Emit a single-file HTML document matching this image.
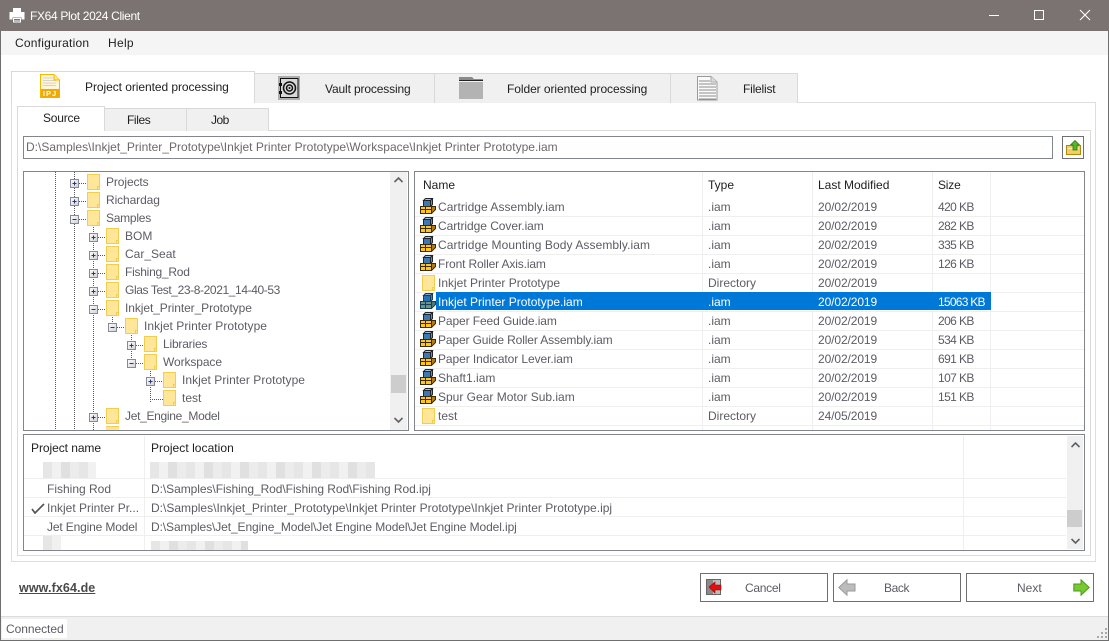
<!DOCTYPE html>
<html><head><meta charset="utf-8"><title>FX64 Plot 2024 Client</title>
<style>
html,body{margin:0;padding:0;background:#fff}
#w{position:relative;width:1109px;height:641px;overflow:hidden;background:#fff;font:12px/16px "Liberation Sans",sans-serif;color:#1e1e1e}
#w div,#w span,#w svg{position:absolute}
.t{white-space:nowrap}
.g{color:#5c5c64}
.z{letter-spacing:-.6px}
.b{box-sizing:border-box;border:1px solid #d9d9d9}
.d{box-sizing:border-box;border:1px solid #82868a;background:#fff}
.h{height:1px;background:#efefef}
.v{width:1px;background:#efefef}
.dv{width:1px;background-image:linear-gradient(#555 50%,transparent 50%);background-size:1px 2px}
.dh{height:1px;background-image:linear-gradient(90deg,#555 50%,transparent 50%);background-size:2px 1px}
.tab{box-sizing:border-box;border:1px solid #d9d9d9;border-bottom:0;background:#f0f0f0}
.btn{box-sizing:border-box;border:1px solid #6f6f6f;background:#fff;top:573px;height:29px;width:128px}
.bl{background:repeating-linear-gradient(90deg,#e6e6e6 0 9px,#f1f1f1 9px 18px,#e0e0e0 18px 27px,#ececec 27px 36px)}
</style></head><body>
<div id="w">
<svg width="0" height="0" style="left:0;top:0">
<defs>
<g id="f"><path d="M.5.5H12.500V15.500H.5Z" fill="#ffe699" stroke="#f3cd4f"/><path d="M10.500 15.500V12.500H12.500" fill="none" stroke="#f3cd4f"/></g>
<linearGradient id="pg" x1="0" y1="0" x2="1" y2="1"><stop offset="0" stop-color="#fff"/><stop offset="1" stop-color="#d0d0d8"/></linearGradient>
<g id="p"><rect x=".5" y=".5" width="8" height="8" fill="url(#pg)" stroke="#858a98"/><path d="M2.500 4.500H6.500" stroke="#28367a"/><path d="M4.500 2.500V6.500" stroke="#28367a"/></g>
<g id="m"><rect x=".5" y=".5" width="8" height="8" fill="url(#pg)" stroke="#858a98"/><path d="M2.500 4.500H6.500" stroke="#28367a"/></g>
<g id="a" stroke="#20242c" stroke-width="1">
<path d="M3.500 2.500 5.500 .5H12.500L10.500 2.500Z" fill="#a8c4dc"/>
<path d="M10.500 2.500 12.500 .5V6.500L10.500 8.500Z" fill="#6a90b0"/>
<path d="M3.500 2.500H10.500V8.500H3.500Z" fill="#3c78b4"/>
<path d="M11.500 8.500H15.500V11.500L11.500 15.500Z" fill="#b87a18" stroke="#3a2a08"/>
<path d="M.5 8.500H11.500V15.500H.5Z" fill="#ffc820" stroke="#3a2a08"/>
<path d="M.5 11.500H11.500M5.500 8.500V15.500" fill="none" stroke="#3a2a08"/>
</g>
<g id="as" stroke="#15405c" stroke-width="1">
<path d="M3.500 2.500 5.500 .5H12.500L10.500 2.500Z" fill="#7fa4c4"/>
<path d="M10.500 2.500 12.500 .5V6.500L10.500 8.500Z" fill="#4f80a8"/>
<path d="M3.500 2.500H10.500V8.500H3.500Z" fill="#2870b4"/>
<path d="M11.500 8.500H15.500V11.500L11.500 15.500Z" fill="#4f7a70"/>
<path d="M.5 8.500H11.500V15.500H.5Z" fill="#6a9484"/>
<path d="M.5 11.500H11.500M5.500 8.500V15.500" fill="none"/>
</g>
</defs></svg>

<!-- title bar -->
<div style="left:0;top:0;width:1109px;height:31px;background:#7a7371"></div>
<svg style="left:9px;top:8px" width="16" height="15" viewBox="0 0 16 15"><path d="M4 0H12V4H4Z" fill="#fff"/><path d="M1 4.500H15V11H13V9H3V11H1Z" fill="#fff" stroke="#fff"/><path d="M4 10H12V14.500H4Z" fill="#fff"/><path d="M5 11.500H11M5 13H11" stroke="#777"/></svg>
<span class="t" style="left:30px;top:8px;color:#fff;font-size:12px;letter-spacing:-.33px">FX64 Plot 2024 Client</span>
<div style="left:989px;top:15px;width:10px;height:1px;background:#fff"></div>
<div style="left:1034px;top:10px;width:10px;height:10px;box-sizing:border-box;border:1px solid #fff"></div>
<svg style="left:1079px;top:9px" width="12" height="12" viewBox="0 0 12 12"><path d="M1 1 11 11M11 1 1 11" stroke="#fff" stroke-width="1.100"/></svg>

<!-- menu -->
<div style="left:0;top:31px;width:1109px;height:24px;background:#f5f5f5"></div>
<span class="t" style="left:15px;top:35px;letter-spacing:.22px">Configuration</span>
<span class="t" style="left:108px;top:35px;letter-spacing:.3px">Help</span>

<!-- outer panel -->
<div class="b" style="left:11px;top:102px;width:1085px;height:460px;background:#fff;border-color:#dedede"></div>
<div class="tab" style="left:254px;top:73px;width:181px;height:30px"></div>
<div class="tab" style="left:434px;top:73px;width:237px;height:30px"></div>
<div class="tab" style="left:670px;top:73px;width:128px;height:30px"></div>
<div class="tab" style="left:11px;top:71px;width:244px;height:32px;background:#fff"></div>
<div style="left:12px;top:102px;width:242px;height:1px;background:#fff"></div>

<svg style="left:40px;top:74px" width="20" height="24" viewBox="0 0 20 24"><path d="M.5.500H14L19.500 6V23.500H.5Z" fill="#fff" stroke="#f5b800"/><path d="M1 1H13.500V6H19V15H1Z" fill="#fff5d8"/><path d="M3 4H13M3 6.500H16M3 9H16M3 11.500H16" stroke="#d9d2c0"/><path d="M14 .5V6H19.500" fill="#ffe38a" stroke="#f5b800"/><path d="M1 15H19.500V23.500H1Z" fill="#f0a900"/><text x="10" y="22" text-anchor="middle" font-size="7.500" font-weight="bold" fill="#fff" font-family="Liberation Sans" letter-spacing="1">IPJ</text></svg>
<span class="t" style="left:85px;top:79px;letter-spacing:-.06px">Project oriented processing</span>

<svg style="left:278px;top:76px" width="22" height="24" viewBox="0 0 22 24"><rect width="22" height="24" fill="#aeaeae"/><rect x="2.500" y="2.500" width="17.500" height="19" fill="#d8d8d8" stroke="#111"/><circle cx="11.500" cy="12" r="6" fill="none" stroke="#111" stroke-width="1.500"/><circle cx="11.500" cy="12" r="3" fill="none" stroke="#111" stroke-width="1.500"/><circle cx="11.500" cy="12" r="1" fill="#111"/><rect x="1" y="7" width="3" height="3" fill="#111"/><rect x="1" y="15" width="3" height="3" fill="#111"/></svg>
<span class="t" style="left:325px;top:81px;letter-spacing:-.14px">Vault processing</span>

<svg style="left:459px;top:77px" width="24" height="22" viewBox="0 0 24 22"><path d="M0 0H13L15 2H24V3H0Z" fill="#8a8a8a"/><path d="M0 3.500H24" stroke="#222"/><rect y="5" width="24" height="17" fill="#b3b3b3"/></svg>
<span class="t" style="left:507px;top:81px;letter-spacing:-.07px">Folder oriented processing</span>

<svg style="left:697px;top:76px" width="21" height="25" viewBox="0 0 21 25"><path d="M.5.500H14L20 6V24H.5Z" fill="#fafafa" stroke="#9a9a9a"/><path d="M14 .5V6H20" fill="#ddd" stroke="#aaa"/><path d="M2 5H13M2 8H19M2 11H19M2 14H19M2 17H19M2 20H19M2 23H19" stroke="#8e8e8e"/></svg>
<span class="t" style="left:743px;top:81px;letter-spacing:-.2px">Filelist</span>

<!-- inner panel -->
<div class="b" style="left:17px;top:130px;width:1074px;height:426px;background:#fff"></div>
<div class="tab" style="left:104px;top:108px;width:83px;height:23px"></div>
<div class="tab" style="left:186px;top:108px;width:83px;height:23px"></div>
<div class="tab" style="left:17px;top:106px;width:88px;height:25px;background:#fff"></div>
<div style="left:18px;top:130px;width:86px;height:1px;background:#fff"></div>
<span class="t" style="left:43px;top:110px;letter-spacing:-.2px">Source</span>
<span class="t" style="left:127px;top:112px;letter-spacing:-.4px">Files</span>
<span class="t" style="left:211px;top:112px;letter-spacing:-.5px">Job</span>

<!-- path -->
<div class="d" style="left:23px;top:136px;width:1030px;height:23px"></div>
<span class="t" style="left:26px;top:139px;color:#6a6a6a;letter-spacing:.01px">D:\Samples\Inkjet_Printer_Prototype\Inkjet Printer Prototype\Workspace\Inkjet Printer Prototype.iam</span>
<div class="d" style="left:1062px;top:136px;width:22px;height:23px;border-color:#6f6f6f"></div>
<svg style="left:1066px;top:140px" width="15" height="15" viewBox="0 0 15 15"><path d="M.5 5.500H14.500V14.500H.5Z" fill="#f0d060" stroke="#b08a10"/><path d="M2 8.500H13" stroke="#fff2b0"/><path d="M9 .5 13.500 5H11V10H7V5H4.500Z" fill="#55b82a" stroke="#2a7a10" stroke-width=".8"/></svg>

<!-- tree -->
<div class="d" style="left:23px;top:171px;width:386px;height:260px"></div>
<div style="left:24px;top:172px;width:384px;height:258px;overflow:hidden">
 <div class="dv" style="left:31px;top:0;height:258px"></div>
 <div class="dv" style="left:50px;top:0;height:258px"></div>
 <div class="dv" style="left:69px;top:51px;height:207px"></div>
 <div class="dv" style="left:88px;top:141px;height:16px"></div>
 <div class="dv" style="left:107px;top:159px;height:36px"></div>
 <div class="dv" style="left:126px;top:195px;height:36px"></div>
 <div class="dh" style="left:55px;top:11px;width:8px"></div>
 <div class="dh" style="left:55px;top:29px;width:8px"></div>
 <div class="dh" style="left:55px;top:47px;width:8px"></div>
 <div class="dh" style="left:74px;top:65px;width:8px"></div>
 <div class="dh" style="left:74px;top:83px;width:8px"></div>
 <div class="dh" style="left:74px;top:101px;width:8px"></div>
 <div class="dh" style="left:74px;top:119px;width:8px"></div>
 <div class="dh" style="left:74px;top:137px;width:8px"></div>
 <div class="dh" style="left:93px;top:155px;width:8px"></div>
 <div class="dh" style="left:112px;top:173px;width:8px"></div>
 <div class="dh" style="left:112px;top:191px;width:8px"></div>
 <div class="dh" style="left:131px;top:209px;width:8px"></div>
 <div class="dh" style="left:126px;top:227px;width:13px"></div>
 <div class="dh" style="left:74px;top:245px;width:8px"></div>
</div>
<svg style="left:70px;top:179px" width="9" height="9"><use href="#p"/></svg>
<svg style="left:70px;top:197px" width="9" height="9"><use href="#p"/></svg>
<svg style="left:70px;top:215px" width="9" height="9"><use href="#m"/></svg>
<svg style="left:89px;top:233px" width="9" height="9"><use href="#p"/></svg>
<svg style="left:89px;top:251px" width="9" height="9"><use href="#p"/></svg>
<svg style="left:89px;top:269px" width="9" height="9"><use href="#p"/></svg>
<svg style="left:89px;top:287px" width="9" height="9"><use href="#p"/></svg>
<svg style="left:89px;top:305px" width="9" height="9"><use href="#m"/></svg>
<svg style="left:108px;top:323px" width="9" height="9"><use href="#m"/></svg>
<svg style="left:127px;top:341px" width="9" height="9"><use href="#p"/></svg>
<svg style="left:127px;top:359px" width="9" height="9"><use href="#m"/></svg>
<svg style="left:146px;top:377px" width="9" height="9"><use href="#p"/></svg>
<svg style="left:89px;top:413px" width="9" height="9"><use href="#p"/></svg>

<svg style="left:87px;top:174px" width="13" height="16"><use href="#f"/></svg><span class="t g" style="left:106px;top:174px;letter-spacing:-.1px">Projects</span>
<svg style="left:87px;top:192px" width="13" height="16"><use href="#f"/></svg><span class="t g" style="left:106px;top:192px;letter-spacing:-.1px">Richardag</span>
<svg style="left:87px;top:210px" width="13" height="16"><use href="#f"/></svg><span class="t g" style="left:106px;top:210px;letter-spacing:-.25px">Samples</span>
<svg style="left:106px;top:228px" width="13" height="16"><use href="#f"/></svg><span class="t g" style="left:125px;top:228px">BOM</span>
<svg style="left:106px;top:246px" width="13" height="16"><use href="#f"/></svg><span class="t g" style="left:125px;top:246px">Car_Seat</span>
<svg style="left:106px;top:264px" width="13" height="16"><use href="#f"/></svg><span class="t g" style="left:125px;top:264px;letter-spacing:-.25px">Fishing_Rod</span>
<svg style="left:106px;top:282px" width="13" height="16"><use href="#f"/></svg><span class="t g" style="left:125px;top:282px;letter-spacing:-.39px">Glas Test_23-8-2021_14-40-53</span>
<svg style="left:106px;top:300px" width="13" height="16"><use href="#f"/></svg><span class="t g" style="left:125px;top:300px;letter-spacing:-.08px">Inkjet_Printer_Prototype</span>
<svg style="left:125px;top:318px" width="13" height="16"><use href="#f"/></svg><span class="t g" style="left:144px;top:318px;letter-spacing:.04px">Inkjet Printer Prototype</span>
<svg style="left:144px;top:336px" width="13" height="16"><use href="#f"/></svg><span class="t g" style="left:163px;top:336px;letter-spacing:-.2px">Libraries</span>
<svg style="left:144px;top:354px" width="13" height="16"><use href="#f"/></svg><span class="t g" style="left:163px;top:354px;letter-spacing:-.1px">Workspace</span>
<svg style="left:163px;top:372px" width="13" height="16"><use href="#f"/></svg><span class="t g" style="left:182px;top:372px;letter-spacing:.04px">Inkjet Printer Prototype</span>
<svg style="left:163px;top:390px" width="13" height="16"><use href="#f"/></svg><span class="t g" style="left:182px;top:390px">test</span>
<svg style="left:106px;top:408px" width="13" height="16"><use href="#f"/></svg><span class="t g" style="left:125px;top:408px;letter-spacing:-.3px">Jet_Engine_Model</span>
<div style="left:106px;top:426px;width:13px;height:4px;background:#ffe699;border-top:1px solid #f3cd4f;box-sizing:border-box"></div>

<div style="left:390px;top:172px;width:17px;height:258px;background:#f0f0f0"></div>
<div style="left:391px;top:375px;width:15px;height:18px;background:#cdcdcd"></div>
<svg style="left:394px;top:177px" width="9" height="6"><path d="M.5 5 4.500 1 8.500 5" fill="none" stroke="#606060" stroke-width="1.600"/></svg>
<svg style="left:394px;top:417px" width="9" height="6"><path d="M.5 1 4.500 5 8.500 1" fill="none" stroke="#606060" stroke-width="1.600"/></svg>

<!-- file list -->
<div class="d" style="left:414px;top:171px;width:671px;height:260px"></div>
<div class="v" style="left:702px;top:172px;height:258px"></div>
<div class="v" style="left:812px;top:172px;height:258px"></div>
<div class="v" style="left:932px;top:172px;height:258px"></div>
<div class="v" style="left:990px;top:172px;height:258px"></div>
<div class="h" style="left:415px;top:216px;width:669px"></div>
<div class="h" style="left:415px;top:235px;width:669px"></div>
<div class="h" style="left:415px;top:254px;width:669px"></div>
<div class="h" style="left:415px;top:273px;width:669px"></div>
<div class="h" style="left:415px;top:292px;width:669px"></div>
<div class="h" style="left:415px;top:311px;width:669px"></div>
<div class="h" style="left:415px;top:330px;width:669px"></div>
<div class="h" style="left:415px;top:349px;width:669px"></div>
<div class="h" style="left:415px;top:368px;width:669px"></div>
<div class="h" style="left:415px;top:387px;width:669px"></div>
<div class="h" style="left:415px;top:406px;width:669px"></div>
<div class="h" style="left:415px;top:425px;width:669px"></div>
<div style="left:436px;top:292px;width:555px;height:18px;background:#0078d7"></div>

<span class="t" style="left:423px;top:177px">Name</span>
<span class="t" style="left:708px;top:177px">Type</span>
<span class="t" style="left:818px;top:177px">Last Modified</span>
<span class="t" style="left:938px;top:177px;letter-spacing:-.2px">Size</span>

<svg style="left:420px;top:198px" width="16" height="16"><use href="#a"/></svg><span class="t g" style="left:438px;top:199px;letter-spacing:.04px">Cartridge Assembly.iam</span><span class="t g" style="left:708px;top:199px">.iam</span><span class="t g" style="left:818px;top:199px;letter-spacing:-.1px">20/02/2019</span><span class="t g z" style="left:938px;top:199px">420 KB</span>
<svg style="left:420px;top:217px" width="16" height="16"><use href="#a"/></svg><span class="t g" style="left:438px;top:218px;letter-spacing:-.05px">Cartridge Cover.iam</span><span class="t g" style="left:708px;top:218px">.iam</span><span class="t g" style="left:818px;top:218px;letter-spacing:-.1px">20/02/2019</span><span class="t g z" style="left:938px;top:218px">282 KB</span>
<svg style="left:420px;top:236px" width="16" height="16"><use href="#a"/></svg><span class="t g" style="left:438px;top:237px;letter-spacing:.08px">Cartridge Mounting Body Assembly.iam</span><span class="t g" style="left:708px;top:237px">.iam</span><span class="t g" style="left:818px;top:237px;letter-spacing:-.1px">20/02/2019</span><span class="t g z" style="left:938px;top:237px">335 KB</span>
<svg style="left:420px;top:255px" width="16" height="16"><use href="#a"/></svg><span class="t g" style="left:438px;top:256px;letter-spacing:-.14px">Front Roller Axis.iam</span><span class="t g" style="left:708px;top:256px">.iam</span><span class="t g" style="left:818px;top:256px;letter-spacing:-.1px">20/02/2019</span><span class="t g z" style="left:938px;top:256px">126 KB</span>
<svg style="left:422px;top:275px" width="13" height="16"><use href="#f"/></svg><span class="t g" style="left:438px;top:275px">Inkjet Printer Prototype</span><span class="t g" style="left:708px;top:275px">Directory</span><span class="t g" style="left:818px;top:275px;letter-spacing:-.1px">20/02/2019</span>
<svg style="left:420px;top:293px" width="16" height="16"><use href="#as"/></svg><span class="t" style="left:438px;top:294px;color:#fff">Inkjet Printer Prototype.iam</span><span class="t" style="left:708px;top:294px;color:#fff">.iam</span><span class="t" style="left:818px;top:294px;color:#fff;letter-spacing:-.1px">20/02/2019</span><span class="t" style="left:938px;top:294px;color:#fff;letter-spacing:-.75px">15063 KB</span>
<svg style="left:420px;top:312px" width="16" height="16"><use href="#a"/></svg><span class="t g" style="left:438px;top:313px;letter-spacing:-.1px">Paper Feed Guide.iam</span><span class="t g" style="left:708px;top:313px">.iam</span><span class="t g" style="left:818px;top:313px;letter-spacing:-.1px">20/02/2019</span><span class="t g z" style="left:938px;top:313px">206 KB</span>
<svg style="left:420px;top:331px" width="16" height="16"><use href="#a"/></svg><span class="t g" style="left:438px;top:332px;letter-spacing:-.13px">Paper Guide Roller Assembly.iam</span><span class="t g" style="left:708px;top:332px">.iam</span><span class="t g" style="left:818px;top:332px;letter-spacing:-.1px">20/02/2019</span><span class="t g z" style="left:938px;top:332px">534 KB</span>
<svg style="left:420px;top:350px" width="16" height="16"><use href="#a"/></svg><span class="t g" style="left:438px;top:351px;letter-spacing:-.08px">Paper Indicator Lever.iam</span><span class="t g" style="left:708px;top:351px">.iam</span><span class="t g" style="left:818px;top:351px;letter-spacing:-.1px">20/02/2019</span><span class="t g z" style="left:938px;top:351px">691 KB</span>
<svg style="left:420px;top:369px" width="16" height="16"><use href="#a"/></svg><span class="t g" style="left:438px;top:370px">Shaft1.iam</span><span class="t g" style="left:708px;top:370px">.iam</span><span class="t g" style="left:818px;top:370px;letter-spacing:-.1px">20/02/2019</span><span class="t g z" style="left:938px;top:370px">107 KB</span>
<svg style="left:420px;top:388px" width="16" height="16"><use href="#a"/></svg><span class="t g" style="left:438px;top:389px">Spur Gear Motor Sub.iam</span><span class="t g" style="left:708px;top:389px">.iam</span><span class="t g" style="left:818px;top:389px;letter-spacing:-.1px">20/02/2019</span><span class="t g z" style="left:938px;top:389px">151 KB</span>
<svg style="left:422px;top:408px" width="13" height="16"><use href="#f"/></svg><span class="t g" style="left:438px;top:408px">test</span><span class="t g" style="left:708px;top:408px">Directory</span><span class="t g" style="left:818px;top:408px;letter-spacing:-.1px">24/05/2019</span>

<!-- project list -->
<div class="d" style="left:23px;top:434px;width:1062px;height:117px"></div>
<div class="v" style="left:144px;top:436px;height:114px"></div>
<div class="v" style="left:963px;top:436px;height:114px"></div>
<div class="h" style="left:24px;top:478px;width:1042px"></div>
<div class="h" style="left:24px;top:497px;width:1042px"></div>
<div class="h" style="left:24px;top:516px;width:1042px"></div>
<div class="h" style="left:24px;top:535px;width:1042px"></div>
<span class="t" style="left:31px;top:440px;letter-spacing:-.06px">Project name</span>
<span class="t" style="left:151px;top:440px;letter-spacing:.05px">Project location</span>

<div class="bl" style="left:43px;top:462px;width:53px;height:16px"></div>
<div class="bl" style="left:150px;top:462px;width:225px;height:16px"></div>
<div class="bl" style="left:43px;top:536px;width:18px;height:14px"></div>
<div class="bl" style="left:151px;top:541px;width:97px;height:9px"></div>

<span class="t g" style="left:47px;top:481px">Fishing Rod</span><span class="t g" style="left:151px;top:481px;letter-spacing:-.06px">D:\Samples\Fishing_Rod\Fishing Rod\Fishing Rod.ipj</span>
<svg style="left:31px;top:503px" width="14" height="11" viewBox="0 0 14 11"><path d="M1 6 4 10 13 1" fill="none" stroke="#555" stroke-width="1.700"/></svg>
<span class="t g" style="left:47px;top:500px">Inkjet Printer Pr...</span><span class="t g" style="left:151px;top:500px;letter-spacing:.01px">D:\Samples\Inkjet_Printer_Prototype\Inkjet Printer Prototype\Inkjet Printer Prototype.ipj</span>
<span class="t g" style="left:47px;top:519px;letter-spacing:-.15px">Jet Engine Model</span><span class="t g" style="left:151px;top:519px;letter-spacing:-.1px">D:\Samples\Jet_Engine_Model\Jet Engine Model\Jet Engine Model.ipj</span>

<div style="left:1067px;top:436px;width:16px;height:113px;background:#f0f0f0"></div>
<div style="left:1067px;top:510px;width:15px;height:17px;background:#cdcdcd"></div>
<svg style="left:1071px;top:442px" width="9" height="6"><path d="M.5 5 4.500 1 8.500 5" fill="none" stroke="#606060" stroke-width="1.600"/></svg>
<svg style="left:1071px;top:538px" width="9" height="6"><path d="M.5 1 4.500 5 8.500 1" fill="none" stroke="#606060" stroke-width="1.600"/></svg>

<!-- footer -->
<span class="t" style="left:19px;top:580px;font-weight:bold;color:#4a4a4a;text-decoration:underline;font-size:12.500px;letter-spacing:.1px">www.fx64.de</span>

<div class="btn" style="left:700px"></div>
<svg style="left:706px;top:579px" width="16" height="17" viewBox="0 0 16 17"><rect x=".5" y=".5" width="14" height="15" fill="#bdbdbd" stroke="#666"/><path d="M1 1H7V15H1Z" fill="#8a8a8a"/><path d="M3 8 9 3V6H15V11H9V14Z" fill="#e01010" stroke="#a00000" stroke-width=".6"/></svg>
<span class="t g" style="left:745px;top:580px;letter-spacing:-.3px">Cancel</span>
<div class="btn" style="left:833px"></div>
<svg style="left:838px;top:579px" width="18" height="17" viewBox="0 0 18 17"><path d="M.8 8.500 9 .8V5H17V12H9V16.200Z" fill="#bcbcbc" stroke="#9a9a9a"/></svg>
<span class="t g" style="left:884px;top:580px;letter-spacing:-.4px">Back</span>
<div class="btn" style="left:966px"></div>
<svg style="left:1073px;top:579px" width="17" height="17" viewBox="0 0 17 17"><path d="M16.200 8.500 8 .8V5H.8V12H8V16.200Z" fill="#78c832" stroke="#4a9a18"/></svg>
<span class="t g" style="left:1017px;top:580px">Next</span>

<!-- status -->
<div style="left:0;top:616px;width:1109px;height:1px;background:#dcdcdc"></div>
<div style="left:0;top:617px;width:1109px;height:24px;background:#f0f0f0"></div>
<div style="left:2px;top:619px;width:65px;height:19px;background:#fff"></div>
<span class="t g" style="left:6px;top:621px;letter-spacing:-.05px">Connected</span>
<svg style="left:1097px;top:626px" width="10" height="13"><path d="M8 2h2v2H8zM8 6h2v2H8zM8 10h2v2H8zM4 6h2v2H4zM4 10h2v2H4zM0 10h2v2H0z" fill="#a8a8a8"/></svg>

<!-- window frame -->
<div style="left:0;top:31px;width:1px;height:610px;background:#6f6f6f"></div>
<div style="left:1108px;top:31px;width:1px;height:610px;background:#6f6f6f"></div>
<div style="left:0;top:640px;width:1109px;height:1px;background:#6f6f6f"></div>
</div>
</body></html>
